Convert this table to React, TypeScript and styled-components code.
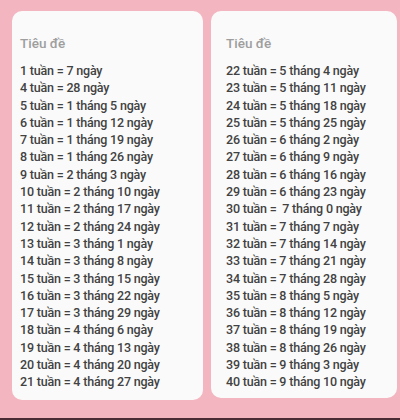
import styled, { createGlobalStyle } from 'styled-components';

const GlobalStyle = createGlobalStyle`
  html, body {
    margin: 0;
    padding: 0;
    background: #f3b5bf;
  }
  * {
    box-sizing: border-box;
  }
`;

const leftRows = [
  '1 tuần = 7 ngày',
  '4 tuần = 28 ngày',
  '5 tuần = 1 tháng 5 ngày',
  '6 tuần = 1 tháng 12 ngày',
  '7 tuần = 1 tháng 19 ngày',
  '8 tuần = 1 tháng 26 ngày',
  '9 tuần = 2 tháng 3 ngày',
  '10 tuần = 2 tháng 10 ngày',
  '11 tuần = 2 tháng 17 ngày',
  '12 tuần = 2 tháng 24 ngày',
  '13 tuần = 3 tháng 1 ngày',
  '14 tuần = 3 tháng 8 ngày',
  '15 tuần = 3 tháng 15 ngày',
  '16 tuần = 3 tháng 22 ngày',
  '17 tuần = 3 tháng 29 ngày',
  '18 tuần = 4 tháng 6 ngày',
  '19 tuần = 4 tháng 13 ngày',
  '20 tuần = 4 tháng 20 ngày',
  '21 tuần = 4 tháng 27 ngày',
];

const rightRows = [
  '22 tuần = 5 tháng 4 ngày',
  '23 tuần = 5 tháng 11 ngày',
  '24 tuần = 5 tháng 18 ngày',
  '25 tuần = 5 tháng 25 ngày',
  '26 tuần = 6 tháng 2 ngày',
  '27 tuần = 6 tháng 9 ngày',
  '28 tuần = 6 tháng 16 ngày',
  '29 tuần = 6 tháng 23 ngày',
  '30 tuần =  7 tháng 0 ngày',
  '31 tuần = 7 tháng 7 ngày',
  '32 tuần = 7 tháng 14 ngày',
  '33 tuần = 7 tháng 21 ngày',
  '34 tuần = 7 tháng 28 ngày',
  '35 tuần = 8 tháng 5 ngày',
  '36 tuần = 8 tháng 12 ngày',
  '37 tuần = 8 tháng 19 ngày',
  '38 tuần = 8 tháng 26 ngày',
  '39 tuần = 9 tháng 3 ngày',
  '40 tuần = 9 tháng 10 ngày',
];

export default function App() {
  return (
    <>
      <GlobalStyle />
      <Screen>
        <Board>
          <Card $width={191} $height={389}>
            <Title>Tiêu đề</Title>
            <List>
              {leftRows.map((row) => (
                <Row key={row}>{row}</Row>
              ))}
            </List>
          </Card>
          <Card $width={186} $height={387} $pad={15}>
            <Title>Tiêu đề</Title>
            <List>
              {rightRows.map((row) => (
                <Row key={row}>{row}</Row>
              ))}
            </List>
          </Card>
        </Board>
        <BottomEdge />
      </Screen>
    </>
  );
}

const Screen = styled.div`
  width: 400px;
  height: 420px;
  display: flex;
  flex-direction: column;
  background: #f3b5bf;
  overflow: hidden;
`;

const Board = styled.div`
  flex: 1;
  display: flex;
  align-items: flex-start;
  gap: 8px;
  padding: 11px 0 0 12px;
`;

const Card = styled.div<{ $width: number; $height: number; $pad?: number }>`
  width: ${(p) => p.$width}px;
  height: ${(p) => p.$height}px;
  flex-shrink: 0;
  background: #fafafa;
  border-radius: 10px;
  padding: 23px 0 0 ${(p) => p.$pad ?? 8}px;
  display: flex;
  flex-direction: column;
  font-family: Roboto, "Noto Sans", sans-serif;
`;

const Title = styled.div`
  font-size: 13.5px;
  color: #9e9e9e;
  font-weight: 500;
  line-height: 18px;
  margin-bottom: 10px;
`;

const List = styled.div`
  display: flex;
  flex-direction: column;
`;

const Row = styled.div`
  font-size: 12.5px;
  line-height: 17.3px;
  color: #424242;
  font-weight: 500;
  white-space: pre;
  letter-spacing: -0.2px;
`;

const BottomEdge = styled.div`
  height: 2px;
  background: #4a2b33;
`;
